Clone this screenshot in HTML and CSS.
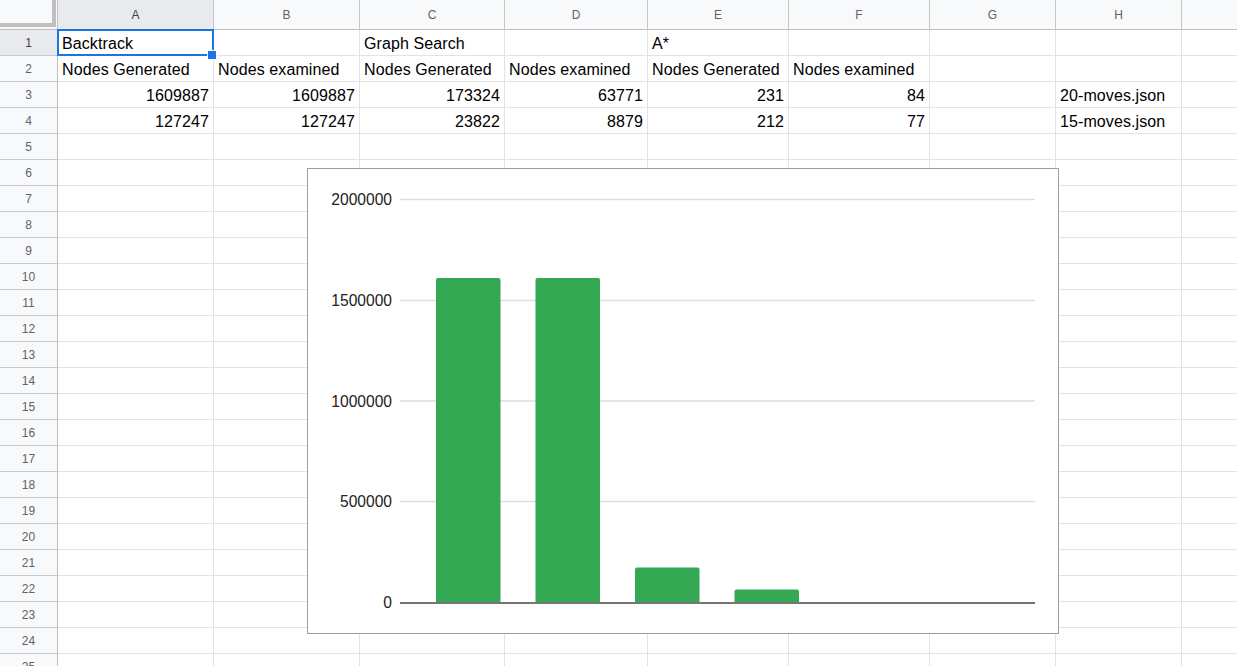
FILE: index.html
```html
<!DOCTYPE html>
<html>
<head>
<meta charset="utf-8">
<title>Sheet</title>
<link rel="stylesheet" href="styles.css">
</head>
<body>
<div class="sheet">
  <div class="row head">
    <div class="corner"><div class="corner-in"></div></div>
    <div class="active">A</div><div>B</div><div>C</div><div>D</div><div>E</div><div>F</div><div>G</div><div>H</div><div></div>
  </div>
  <div class="row">
    <div class="rh active">1</div>
    <div class="c">Backtrack</div><div class="c"></div><div class="c">Graph Search</div><div class="c"></div><div class="c">A*</div><div class="c"></div><div class="c"></div><div class="c"></div><div class="c"></div>
  </div>
  <div class="row">
    <div class="rh">2</div>
    <div class="c">Nodes Generated</div><div class="c">Nodes examined</div><div class="c">Nodes Generated</div><div class="c">Nodes examined</div><div class="c">Nodes Generated</div><div class="c">Nodes examined</div><div class="c"></div><div class="c"></div><div class="c"></div>
  </div>
  <div class="row">
    <div class="rh">3</div>
    <div class="c n">1609887</div><div class="c n">1609887</div><div class="c n">173324</div><div class="c n">63771</div><div class="c n">231</div><div class="c n">84</div><div class="c"></div><div class="c">20-moves.json</div><div class="c"></div>
  </div>
  <div class="row">
    <div class="rh">4</div>
    <div class="c n">127247</div><div class="c n">127247</div><div class="c n">23822</div><div class="c n">8879</div><div class="c n">212</div><div class="c n">77</div><div class="c"></div><div class="c">15-moves.json</div><div class="c"></div>
  </div>
  <div class="row"><div class="rh">5</div><div class="c"></div><div class="c"></div><div class="c"></div><div class="c"></div><div class="c"></div><div class="c"></div><div class="c"></div><div class="c"></div><div class="c"></div></div>
  <div class="row"><div class="rh">6</div><div class="c"></div><div class="c"></div><div class="c"></div><div class="c"></div><div class="c"></div><div class="c"></div><div class="c"></div><div class="c"></div><div class="c"></div></div>
  <div class="row"><div class="rh">7</div><div class="c"></div><div class="c"></div><div class="c"></div><div class="c"></div><div class="c"></div><div class="c"></div><div class="c"></div><div class="c"></div><div class="c"></div></div>
  <div class="row"><div class="rh">8</div><div class="c"></div><div class="c"></div><div class="c"></div><div class="c"></div><div class="c"></div><div class="c"></div><div class="c"></div><div class="c"></div><div class="c"></div></div>
  <div class="row"><div class="rh">9</div><div class="c"></div><div class="c"></div><div class="c"></div><div class="c"></div><div class="c"></div><div class="c"></div><div class="c"></div><div class="c"></div><div class="c"></div></div>
  <div class="row"><div class="rh">10</div><div class="c"></div><div class="c"></div><div class="c"></div><div class="c"></div><div class="c"></div><div class="c"></div><div class="c"></div><div class="c"></div><div class="c"></div></div>
  <div class="row"><div class="rh">11</div><div class="c"></div><div class="c"></div><div class="c"></div><div class="c"></div><div class="c"></div><div class="c"></div><div class="c"></div><div class="c"></div><div class="c"></div></div>
  <div class="row"><div class="rh">12</div><div class="c"></div><div class="c"></div><div class="c"></div><div class="c"></div><div class="c"></div><div class="c"></div><div class="c"></div><div class="c"></div><div class="c"></div></div>
  <div class="row"><div class="rh">13</div><div class="c"></div><div class="c"></div><div class="c"></div><div class="c"></div><div class="c"></div><div class="c"></div><div class="c"></div><div class="c"></div><div class="c"></div></div>
  <div class="row"><div class="rh">14</div><div class="c"></div><div class="c"></div><div class="c"></div><div class="c"></div><div class="c"></div><div class="c"></div><div class="c"></div><div class="c"></div><div class="c"></div></div>
  <div class="row"><div class="rh">15</div><div class="c"></div><div class="c"></div><div class="c"></div><div class="c"></div><div class="c"></div><div class="c"></div><div class="c"></div><div class="c"></div><div class="c"></div></div>
  <div class="row"><div class="rh">16</div><div class="c"></div><div class="c"></div><div class="c"></div><div class="c"></div><div class="c"></div><div class="c"></div><div class="c"></div><div class="c"></div><div class="c"></div></div>
  <div class="row"><div class="rh">17</div><div class="c"></div><div class="c"></div><div class="c"></div><div class="c"></div><div class="c"></div><div class="c"></div><div class="c"></div><div class="c"></div><div class="c"></div></div>
  <div class="row"><div class="rh">18</div><div class="c"></div><div class="c"></div><div class="c"></div><div class="c"></div><div class="c"></div><div class="c"></div><div class="c"></div><div class="c"></div><div class="c"></div></div>
  <div class="row"><div class="rh">19</div><div class="c"></div><div class="c"></div><div class="c"></div><div class="c"></div><div class="c"></div><div class="c"></div><div class="c"></div><div class="c"></div><div class="c"></div></div>
  <div class="row"><div class="rh">20</div><div class="c"></div><div class="c"></div><div class="c"></div><div class="c"></div><div class="c"></div><div class="c"></div><div class="c"></div><div class="c"></div><div class="c"></div></div>
  <div class="row"><div class="rh">21</div><div class="c"></div><div class="c"></div><div class="c"></div><div class="c"></div><div class="c"></div><div class="c"></div><div class="c"></div><div class="c"></div><div class="c"></div></div>
  <div class="row"><div class="rh">22</div><div class="c"></div><div class="c"></div><div class="c"></div><div class="c"></div><div class="c"></div><div class="c"></div><div class="c"></div><div class="c"></div><div class="c"></div></div>
  <div class="row"><div class="rh">23</div><div class="c"></div><div class="c"></div><div class="c"></div><div class="c"></div><div class="c"></div><div class="c"></div><div class="c"></div><div class="c"></div><div class="c"></div></div>
  <div class="row"><div class="rh">24</div><div class="c"></div><div class="c"></div><div class="c"></div><div class="c"></div><div class="c"></div><div class="c"></div><div class="c"></div><div class="c"></div><div class="c"></div></div>
  <div class="row"><div class="rh">25</div><div class="c"></div><div class="c"></div><div class="c"></div><div class="c"></div><div class="c"></div><div class="c"></div><div class="c"></div><div class="c"></div><div class="c"></div></div>

  <div class="sel"></div>
  <div class="handle"></div>

  <div class="chart">
    <svg class="plot" width="750" height="464" viewBox="0 0 750 464" xmlns="http://www.w3.org/2000/svg">
      <g class="grid">
        <line x1="92" y1="30.5" x2="727" y2="30.5"/>
        <line x1="92" y1="131.5" x2="727" y2="131.5"/>
        <line x1="92" y1="232" x2="727" y2="232"/>
        <line x1="92" y1="332.5" x2="727" y2="332.5"/>
      </g>
      <g class="labels">
        <text x="84" y="36">2000000</text>
        <text x="84" y="137">1500000</text>
        <text x="84" y="237.5">1000000</text>
        <text x="84" y="338">500000</text>
        <text x="84" y="439">0</text>
      </g>
      <g class="bars">
        <path d="M128,433 V111 Q128,109 130,109 H190.5 Q192.5,109 192.5,111 V433 Z"/>
        <path d="M227.5,433 V111 Q227.5,109 229.5,109 H290 Q292,109 292,111 V433 Z"/>
        <path d="M327,433 V400.6 Q327,398.6 329,398.6 H389.5 Q391.5,398.6 391.5,400.6 V433 Z"/>
        <path d="M426.5,433 V422.6 Q426.5,420.6 428.5,420.6 H489 Q491,420.6 491,422.6 V433 Z"/>
      </g>
      <line class="axis" x1="92" y1="434" x2="727" y2="434"/>
    </svg>
  </div>
</div>
</body>
</html>
```

FILE: styles.css
```css
html, body {
  margin: 0;
  padding: 0;
  background: #fff;
  overflow: hidden;
}

body {
  font-family: "Liberation Sans", Arial, sans-serif;
}

.sheet {
  position: relative;
  width: 1237px;
  height: 666px;
  overflow: hidden;
}

.row {
  display: grid;
  grid-template-columns: 58px 156px 146px 145px 143px 141px 141px 126px 126px 126px;
  height: 26px;
}

.row > div {
  box-sizing: border-box;
  border-right: 1px solid #e2e3e3;
  border-bottom: 1px solid #e2e3e3;
  overflow: hidden;
  white-space: nowrap;
}

.row.head {
  height: 30px;
}

.row.head > div {
  background: #f8f9fa;
  border-right-color: #c4c7c5;
  border-bottom-color: #c0c0c0;
  color: #5f6368;
  font-size: 12px;
  line-height: 29px;
  padding-top: 1px;
  text-align: center;
}

.row.head > div.active {
  background: #e8eaed;
  color: #3c4043;
}

.row.head > div.corner {
  background: #f8f9fa;
  border-right-color: #c0c0c0;
  padding-top: 0;
}

.corner-in {
  box-sizing: border-box;
  width: 56px;
  height: 27px;
  border-right: 4px solid #c0c0c0;
  border-bottom: 4px solid #c0c0c0;
  background: #f8f9fa;
}

.row > div.rh {
  background: #f8f9fa;
  border-right-color: #c0c0c0;
  border-bottom-color: #c8c9ca;
  color: #5f6368;
  font-size: 12px;
  line-height: 25px;
  padding-top: 1px;
  text-align: center;
}

.row > div.rh.active {
  background: #e8eaed;
  color: #3c4043;
}

.c {
  padding: 1px 4px 0 4px;
  font-size: 16px;
  line-height: 25px;
  letter-spacing: 0.1px;
  color: #000;
}

.c.n {
  text-align: right;
}

.sel {
  position: absolute;
  left: 57px;
  top: 29px;
  width: 157px;
  height: 27px;
  box-sizing: border-box;
  border: 2px solid #1a73e8;
}

.handle {
  position: absolute;
  left: 208px;
  top: 51px;
  width: 8px;
  height: 8px;
  background: #1a73e8;
  box-shadow: 0 0 0 1px #fff;
}

.chart {
  position: absolute;
  left: 307px;
  top: 168px;
  width: 752px;
  height: 466px;
  box-sizing: border-box;
  border: 1px solid #9e9e9e;
  background: #fff;
}

.plot {
  display: block;
}

.grid line {
  stroke: #dedede;
  stroke-width: 1.3;
}

.labels text {
  font-family: "Liberation Sans", Arial, sans-serif;
  font-size: 15.6px;
  fill: #222;
  text-anchor: end;
}

.bars path {
  fill: #34a853;
}

.axis {
  stroke: #757575;
  stroke-width: 2;
}
```
